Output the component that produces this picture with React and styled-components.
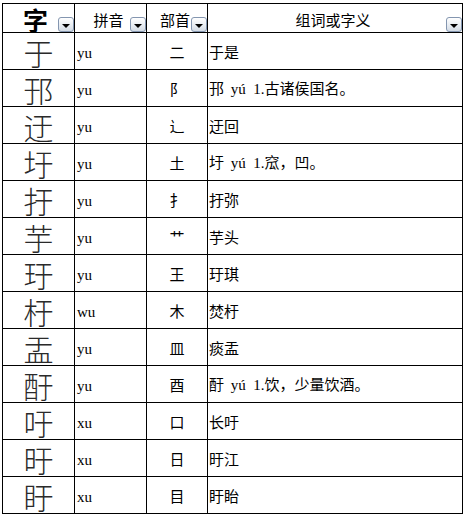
import React from "react";
import styled, { createGlobalStyle } from "styled-components";

const Global = createGlobalStyle`
  html, body { margin: 0; padding: 0; background: #fff; }
  body { font-family: "Noto Sans CJK SC", "Noto Sans", sans-serif; }
`;

const Sheet = styled.div`
  margin: 3px 0 0 2px;
  display: grid;
  grid-template-columns: 72px 72px 61px 255px;
  grid-auto-rows: 37px;
  grid-template-rows: 29px;
  border-left: 1px solid #000;
  border-top: 1px solid #000;
  width: max-content;
`;

const Cell = styled.div`
  position: relative;
  box-sizing: border-box;
  border-right: 1px solid #000;
  border-bottom: 1px solid #000;
  display: flex;
  align-items: center;
  justify-content: ${(p) => (p.$align === "left" ? "flex-start" : "center")};
  padding-left: ${(p) => (p.$align === "left" ? "1px" : "0")};
  line-height: 1;
  white-space: pre;
  color: #000;
`;

const HeadCell = styled(Cell)`
  font-size: ${(p) => (p.$big ? "25px" : "15px")};
  font-weight: ${(p) => (p.$big ? 600 : 400)};
  padding-top: 3px;
  padding-right: ${(p) => (p.$big ? "6px" : "4px")};
`;

const FilterButton = styled.span`
  position: absolute;
  right: 0;
  bottom: 0;
  width: 16px;
  height: 15px;
  box-sizing: border-box;
  border: 1px solid #8496b0;
  border-radius: 3px;
  background: linear-gradient(#ffffff, #e6ebf1 60%, #d3dbe5);
  display: flex;
  align-items: center;
  justify-content: center;
  &::after {
    content: "";
    margin-top: 2px;
    border-left: 4px solid transparent;
    border-right: 4px solid transparent;
    border-top: 4px solid #000;
  }
`;

const BigChar = styled(Cell)`
  font-size: 30px;
  font-weight: 300;
  color: #2a2a2a;
  padding-top: 1px;
`;

const Pinyin = styled(Cell)`
  font-family: "Liberation Serif", serif;
  font-size: 15px;
  padding-top: 5px;
  padding-left: 2px;
`;

const Radical = styled(Cell)`
  font-size: 15px;
`;

const Meaning = styled(Cell)`
  font-size: 15px;
  padding-top: 1px;
`;

const Latin = styled.span`
  font-family: "Liberation Serif", serif;
`;

const rows = [
  ["于", "yu", "二", "于是"],
  ["邘", "yu", "阝", ["邘  ", "yú  1.", "古诸侯国名。"]],
  ["迂", "yu", "辶", "迂回"],
  ["圩", "yu", "土", ["圩  ", "yú  1.", "窊，凹。"]],
  ["扜", "yu", "扌", "扜弥"],
  ["芋", "yu", "艹", "芋头"],
  ["玗", "yu", "王", "玗琪"],
  ["杅", "wu", "木", "焚杅"],
  ["盂", "yu", "皿", "痰盂"],
  ["酑", "yu", "酉", ["酑  ", "yú  1.", "饮，少量饮酒。"]],
  ["吁", "xu", "口", "长吁"],
  ["旴", "xu", "日", "旴江"],
  ["盱", "xu", "目", "盱眙"],
];

export default function App() {
  return (
    <>
      <Global />
      <Sheet>
        <HeadCell $big>
          <span>字</span>
          <FilterButton />
        </HeadCell>
        <HeadCell>
          <span>拼音</span>
          <FilterButton />
        </HeadCell>
        <HeadCell>
          <span>部首</span>
          <FilterButton />
        </HeadCell>
        <HeadCell>
          <span>组词或字义</span>
          <FilterButton />
        </HeadCell>
        {rows.map(([ch, py, rad, mean], i) => (
          <React.Fragment key={i}>
            <BigChar>{ch}</BigChar>
            <Pinyin $align="left">{py}</Pinyin>
            <Radical>{rad}</Radical>
            <Meaning $align="left">
              {Array.isArray(mean) ? (
                <span>
                  {mean[0]}
                  <Latin>{mean[1]}</Latin>
                  {mean[2]}
                </span>
              ) : (
                <span>{mean}</span>
              )}
            </Meaning>
          </React.Fragment>
        ))}
      </Sheet>
    </>
  );
}
